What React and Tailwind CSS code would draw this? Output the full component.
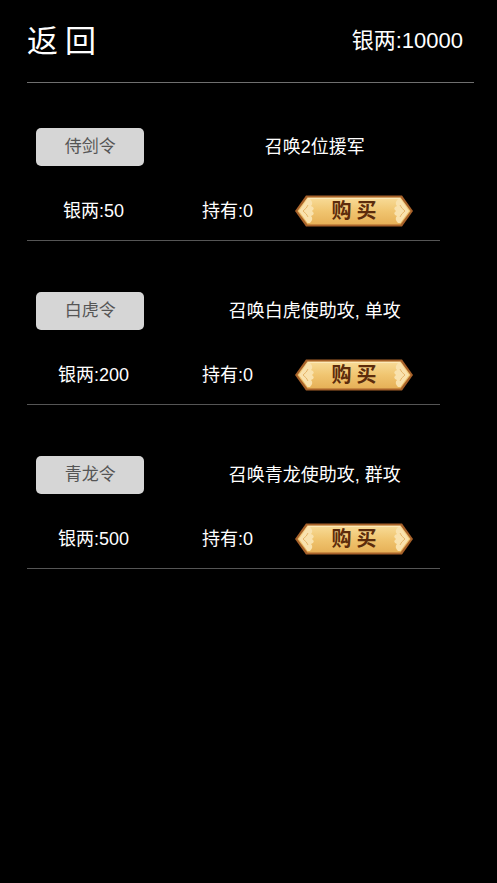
import React from 'react';

const items = [
  { name: '侍剑令', desc: '召唤2位援军', price: 50, owned: 0 },
  { name: '白虎令', desc: '召唤白虎使助攻, 单攻', price: 200, owned: 0 },
  { name: '青龙令', desc: '召唤青龙使助攻, 群攻', price: 500, owned: 0 },
];

const BuyButton = () => (
  <button className="relative w-[118px] h-[34px] flex items-center justify-center">
    <svg className="absolute inset-0" width="118" height="34" viewBox="0 0 118 34">
      <defs>
        <linearGradient id="gold" x1="0" y1="0" x2="0" y2="1">
          <stop offset="0" stopColor="#f8dc98" />
          <stop offset="0.5" stopColor="#f0c570" />
          <stop offset="1" stopColor="#e6b057" />
        </linearGradient>
      </defs>
      <polygon points="0,17 11,1.5 107,1.5 118,17 107,32.5 11,32.5" fill="#a8622a" />
      <polygon points="2.5,17 12.5,3.5 105.5,3.5 115.5,17 105.5,30.5 12.5,30.5" fill="url(#gold)" />
      <line x1="13" y1="4.5" x2="105" y2="4.5" stroke="#fde9b8" strokeWidth="1" />
      <path d="M4,17 L12.5,5 L15,5 Q19,9 16,12 Q21,14 17,17 Q21,20 16,22 Q19,25 15,29 L12.5,29 Z" fill="#f9e2ae" />
      <path d="M114,17 L105.5,5 L103,5 Q99,9 102,12 Q97,14 101,17 Q97,20 102,22 Q99,25 103,29 L105.5,29 Z" fill="#f9e2ae" />
      <path d="M8,17 Q12,14 13,11 M8,17 Q12,20 13,23" stroke="#e0a95a" strokeWidth="0.8" fill="none" />
      <path d="M110,17 Q106,14 105,11 M110,17 Q106,20 105,23" stroke="#e0a95a" strokeWidth="0.8" fill="none" />
    </svg>
    <span className="relative text-[20px] font-bold tracking-[5px] text-[#5c2c0c] leading-none pl-[5px]">购买</span>
  </button>
);

export default function App() {
  return (
    <div
      className="min-h-[883px] w-full bg-black text-white"
      style={{ fontFamily: '"Liberation Sans", "Noto Sans CJK SC", sans-serif' }}
    >
      <div className="pl-[27px] pr-[23px]">
        <div className="h-[83px] flex items-center justify-between border-b border-[#6f6f6f] pr-[11px]">
          <span className="text-[31px] tracking-[7px] leading-none">返回</span>
          <span className="text-[22px] leading-none">银两:10000</span>
        </div>
      </div>
      <div className="pl-[27px]">
        {items.map((item, i) => (
          <div
            key={item.name}
            className={`w-[413px] border-b border-[#555] pb-[12px] ${i === 0 ? 'pt-[45px]' : 'pt-[51px]'}`}
          >
            <div className="flex items-center h-[38px]">
              <button className="ml-[9px] w-[109px] h-[38px] rounded-[5px] bg-[#d6d6d6] text-[#555] text-[17px]">
                {item.name}
              </button>
              <div className="ml-[45px] w-[252px] text-center text-[18px]">{item.desc}</div>
            </div>
            <div className="flex items-center h-[34px] mt-[28px]">
              <div className="w-[133px] text-center text-[18px]">银两:{item.price}</div>
              <div className="w-[135px] text-center text-[18px]">持有:{item.owned}</div>
              <BuyButton />
            </div>
          </div>
        ))}
      </div>
    </div>
  );
}
